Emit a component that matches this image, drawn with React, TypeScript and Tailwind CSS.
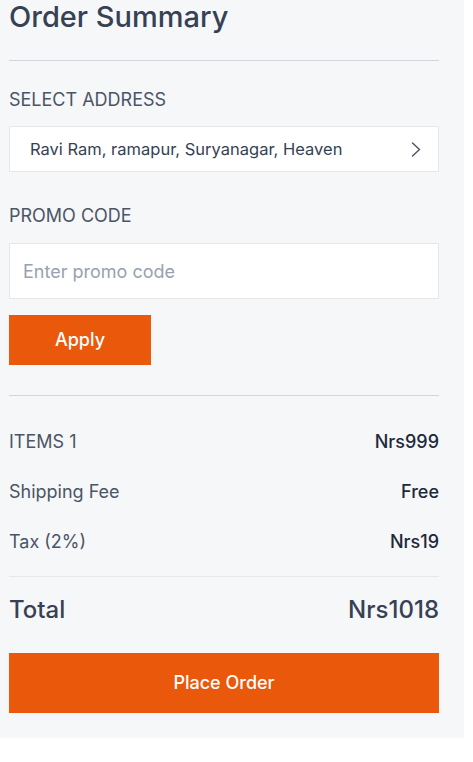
const font = { fontFamily: "Inter, 'Noto Sans', sans-serif" };

function Row({ label, value }: { label: string; value: string }) {
  return (
    <div className="flex items-center justify-between h-7 text-lg">
      <span className="text-gray-600">{label}</span>
      <span className="font-medium text-gray-800">{value}</span>
    </div>
  );
}

export default function App() {
  return (
    <div className="w-[464px] bg-[#f6f7f9] pl-[9px] pr-[25px] pb-[25px]" style={font}>
      <h2 className="text-[29px] leading-[34px] font-medium text-gray-700">Order Summary</h2>
      <hr className="mt-[26px] border-gray-300" />

      <label className="block mt-[25px] text-lg leading-7 uppercase text-gray-600">Select Address</label>
      <div className="mt-3 h-[46px] flex items-center justify-between bg-white border border-gray-200 pl-[20px] pr-[17px]">
        <span className="text-[16.5px] text-gray-700">Ravi Ram, ramapur, Suryanagar, Heaven</span>
        <svg width="10" height="15" viewBox="0 0 10 15" fill="none" className="text-gray-600">
          <path d="M1.5 1 L8.5 7.5 L1.5 14" stroke="currentColor" strokeWidth="1.4" strokeLinecap="round" strokeLinejoin="round" />
        </svg>
      </div>

      <label className="block mt-[30px] text-lg leading-7 uppercase text-gray-600">Promo Code</label>
      <input
        type="text"
        placeholder="Enter promo code"
        className="mt-[13px] w-full h-[56px] bg-white border border-gray-200 px-[13px] text-lg text-gray-700 placeholder:text-gray-400 outline-none"
      />
      <button className="mt-4 w-[142px] h-[50px] bg-[#ea580c] text-white text-lg font-medium">Apply</button>

      <hr className="mt-[30px] border-gray-300" />

      <div className="mt-[32px] flex flex-col gap-[22px]">
        <Row label="ITEMS 1" value="Nrs999" />
        <Row label="Shipping Fee" value="Free" />
        <Row label="Tax (2%)" value="Nrs19" />
      </div>

      <hr className="mt-[20px] border-gray-200" />

      <div className="mt-[17px] flex items-center justify-between text-2xl leading-8 font-medium text-gray-700">
        <span>Total</span>
        <span>Nrs1018</span>
      </div>

      <button className="mt-[27px] w-full h-[60px] bg-[#ea580c] text-white text-lg font-medium">Place Order</button>
    </div>
  );
}
